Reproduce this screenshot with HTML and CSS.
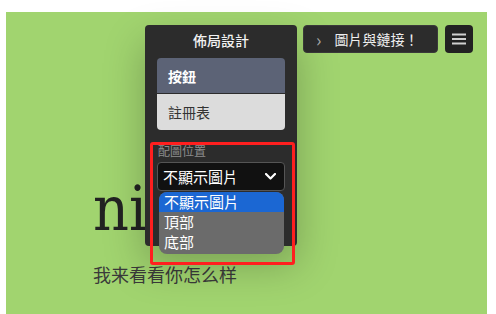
FILE: index.html
```html
<!DOCTYPE html>
<html lang="zh-Hant">
<head>
  <meta charset="UTF-8">
  <meta name="viewport" content="width=device-width, initial-scale=1.0">
  <title>佈局設計</title>
  <link rel="stylesheet" href="styles.css">
</head>
<body>
  <div class="stage">
    <!-- Floating editor toolbar -->
    <div class="toolbar">
      <div class="panel">
        <div class="panel-title">佈局設計</div>
        <div class="tabs">
          <button class="tab active">按鈕</button>
          <button class="tab">註冊表</button>
        </div>
        <div class="field">
          <label class="field-label">配圖位置</label>
          <div class="select">
            <span>不顯示圖片</span>
            <svg width="11" height="7" viewBox="0 0 11 7"><path d="M1 1l4.5 4.5L10 1" fill="none" stroke="#fff" stroke-width="2.2" stroke-linecap="round" stroke-linejoin="round"/></svg>
          </div>
          <ul class="options">
            <li class="selected">不顯示圖片</li>
            <li>頂部</li>
            <li>底部</li>
          </ul>
        </div>
        <!-- highlight around the field -->
        <div class="highlight"></div>
      </div>
      <button class="link-btn"><span class="chev">›</span>圖片與鏈接！</button>
      <button class="menu-btn">
        <svg width="14" height="12" viewBox="0 0 14 12"><path d="M0 1.5h14M0 6h14M0 10.5h14" stroke="#d0d0d0" stroke-width="1.8"/></svg>
      </button>
    </div>

    <h1 class="hero">nihao</h1>
    <p class="sub">我来看看你怎么样</p>
  </div>
</body>
</html>
```

FILE: styles.css
```css
* {
  margin: 0;
  padding: 0;
  box-sizing: border-box;
}

body {
  background: #fff;
  font-family: "Noto Sans CJK TC", "Noto Sans", sans-serif;
  height: 314px;
  overflow: hidden;
}

/* Green canvas */
.stage {
  position: relative;
  margin: 12px 9px 0 6px;
  height: 302px;
  background: #a1d46f;
  padding: 161px 0 0 87px;
}

.hero {
  font-family: "DejaVu Serif", serif;
  font-stretch: condensed;
  font-weight: normal;
  font-size: 62px;
  line-height: 72px;
  color: #222;
}

.sub {
  margin-top: 17px;
  font-family: "Noto Sans CJK SC", sans-serif;
  font-size: 18px;
  line-height: 24px;
  color: #3a3a3a;
}

/* Toolbar */
.toolbar {
  position: absolute;
  top: 13px;
  left: 139px;
  display: flex;
  align-items: flex-start;
  gap: 6px;
  z-index: 2;
}

.panel {
  position: relative;
  width: 152px;
  background: #2c2c2c;
  border-radius: 4px;
  padding: 0 12px 55px;
  box-shadow: 0 18px 40px rgba(0, 0, 0, 0.25);
}

.panel-title {
  height: 28px;
  line-height: 30px;
  text-align: center;
  color: #f2f2f2;
  font-size: 14px;
  font-weight: 500;
}

.tabs {
  margin-top: 5px;
  border-radius: 4px;
  overflow: hidden;
}

.tab {
  display: block;
  width: 100%;
  height: 36px;
  border: none;
  text-align: left;
  padding-left: 11px;
  font-family: inherit;
  font-size: 14px;
  background: #dcdcdc;
  color: #333;
}

.tab.active {
  background: #5c6376;
  color: #fff;
  font-weight: bold;
  border-bottom: 1px solid #2c2c2c;
}

.field {
  position: relative;
  margin-top: 14px;
}

.field-label {
  display: block;
  font-size: 12px;
  line-height: 14px;
  color: #8c8c8c;
  margin-bottom: 4px;
  padding-left: 1px;
}

.select {
  height: 29px;
  background: #111;
  border: 1px solid #555;
  border-radius: 4px;
  display: flex;
  align-items: center;
  justify-content: space-between;
  padding: 0 8px 0 5px;
  color: #fff;
  font-size: 15px;
}

.options {
  position: absolute;
  top: 48px;
  left: 2px;
  width: 125px;
  list-style: none;
  background: #6b6b6b;
  border-radius: 8px;
  overflow: hidden;
  padding-bottom: 2px;
  color: #fff;
  font-size: 15px;
}

.options li {
  height: 20px;
  line-height: 20px;
  padding-left: 5px;
}

.options li.selected {
  background: #1b67d3;
}

.highlight {
  position: absolute;
  left: 5px;
  top: 117px;
  width: 145px;
  height: 123px;
  border: 3px solid #ff1f1f;
  border-radius: 3px;
  pointer-events: none;
}

.link-btn {
  width: 135px;
  height: 28px;
  background: #2c2c2c;
  border: 1px solid #3a3a3a;
  border-radius: 4px;
  color: #eee;
  font-family: inherit;
  font-size: 14px;
  text-align: left;
  padding-left: 12px;
  display: flex;
  align-items: center;
}

.link-btn .chev {
  color: #aaa;
  font-size: 18px;
  margin-right: 13px;
  line-height: 1;
}

.menu-btn {
  margin-left: 1px;
  width: 28px;
  height: 28px;
  background: #222;
  border: none;
  border-radius: 4px;
  display: flex;
  align-items: center;
  justify-content: center;
}
```
